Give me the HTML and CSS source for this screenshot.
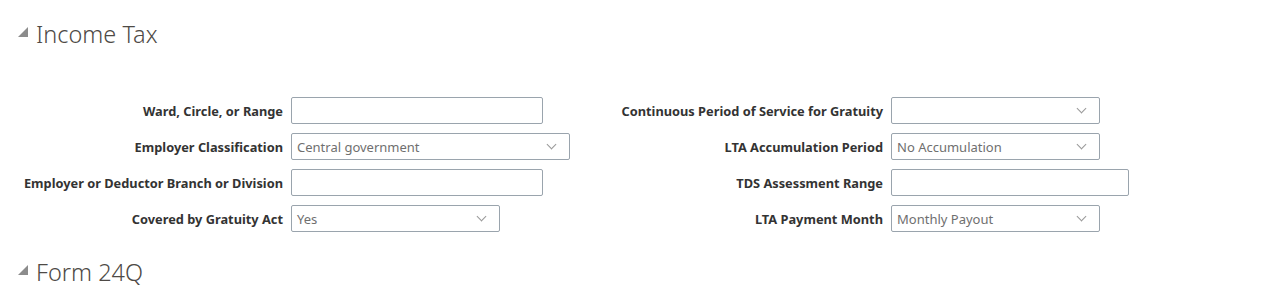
FILE: index.html
```html
<!DOCTYPE html>
<html lang="en">
<head>
    <meta charset="UTF-8">
    <title>Income Tax</title>
    <link rel="stylesheet" href="styles.css">
</head>
<body>

<!-- Income Tax section -->
<div class="section">
    <h2 class="section-title"><span class="disclosure"></span>Income Tax</h2>

    <div class="form">
        <div class="form-col">
            <label class="label">Ward, Circle, or Range</label>
            <div><input type="text" class="input-field w-text"></div>

            <label class="label">Employer Classification</label>
            <div class="select w-wide"><span class="value">Central government</span><span class="chevron"></span></div>

            <label class="label">Employer or Deductor Branch or Division</label>
            <div><input type="text" class="input-field w-text"></div>

            <label class="label">Covered by Gratuity Act</label>
            <div class="select w-select"><span class="value">Yes</span><span class="chevron"></span></div>
        </div>

        <div class="form-col">
            <label class="label">Continuous Period of Service for Gratuity</label>
            <div class="select w-select"><span class="value"></span><span class="chevron"></span></div>

            <label class="label">LTA Accumulation Period</label>
            <div class="select w-select"><span class="value">No Accumulation</span><span class="chevron"></span></div>

            <label class="label">TDS Assessment Range</label>
            <div><input type="text" class="input-field w-tds"></div>

            <label class="label">LTA Payment Month</label>
            <div class="select w-select"><span class="value">Monthly Payout</span><span class="chevron"></span></div>
        </div>
    </div>
</div>

<!-- Form 24Q section -->
<div class="section">
    <h2 class="section-title"><span class="disclosure"></span>Form 24Q</h2>
</div>

</body>
</html>
```

FILE: styles.css
```css
body {
    font-family: "Noto Sans", "Open Sans", sans-serif;
    background-color: #fff;
    color: #333;
    margin: 0;
    padding: 0;
}

.section-title {
    display: flex;
    align-items: center;
    margin: 0;
    padding-left: 18px;
    font-weight: 300;
    font-size: 23.5px;
    color: #4e4a46;
    height: 36px;
}

.section:first-child .section-title {
    margin-top: 16px;
}

.disclosure {
    width: 0;
    height: 0;
    border-left: 10px solid transparent;
    border-bottom: 10px solid #8c8c8c;
    margin-right: 8px;
    margin-top: -4px;
}

.form {
    display: flex;
    padding-top: 45px;
    padding-bottom: 22px;
}

.form-col {
    width: 600px;
    display: grid;
    grid-template-columns: 283px auto;
    column-gap: 8px;
    row-gap: 9px;
    align-items: center;
}

.label {
    text-align: right;
    font-size: 12.8px;
    font-weight: bold;
    color: #333;
}

.input-field,
.select {
    box-sizing: border-box;
    height: 27px;
    border: 1px solid #9aa4ad;
    border-radius: 2px;
    background: #fff;
    margin: 0;
    padding: 0 5px;
    font-family: inherit;
    font-size: 13px;
}

.select {
    display: flex;
    align-items: center;
    justify-content: space-between;
    color: #6f6f6f;
}

.chevron {
    width: 6px;
    height: 6px;
    border-right: 1px solid #999;
    border-bottom: 1px solid #999;
    transform: rotate(45deg);
    margin: -4px 9px 0 0;
}

.w-text { width: 252px; }
.w-wide { width: 279px; }
.w-select { width: 209px; }
.w-tds { width: 238px; }
```
